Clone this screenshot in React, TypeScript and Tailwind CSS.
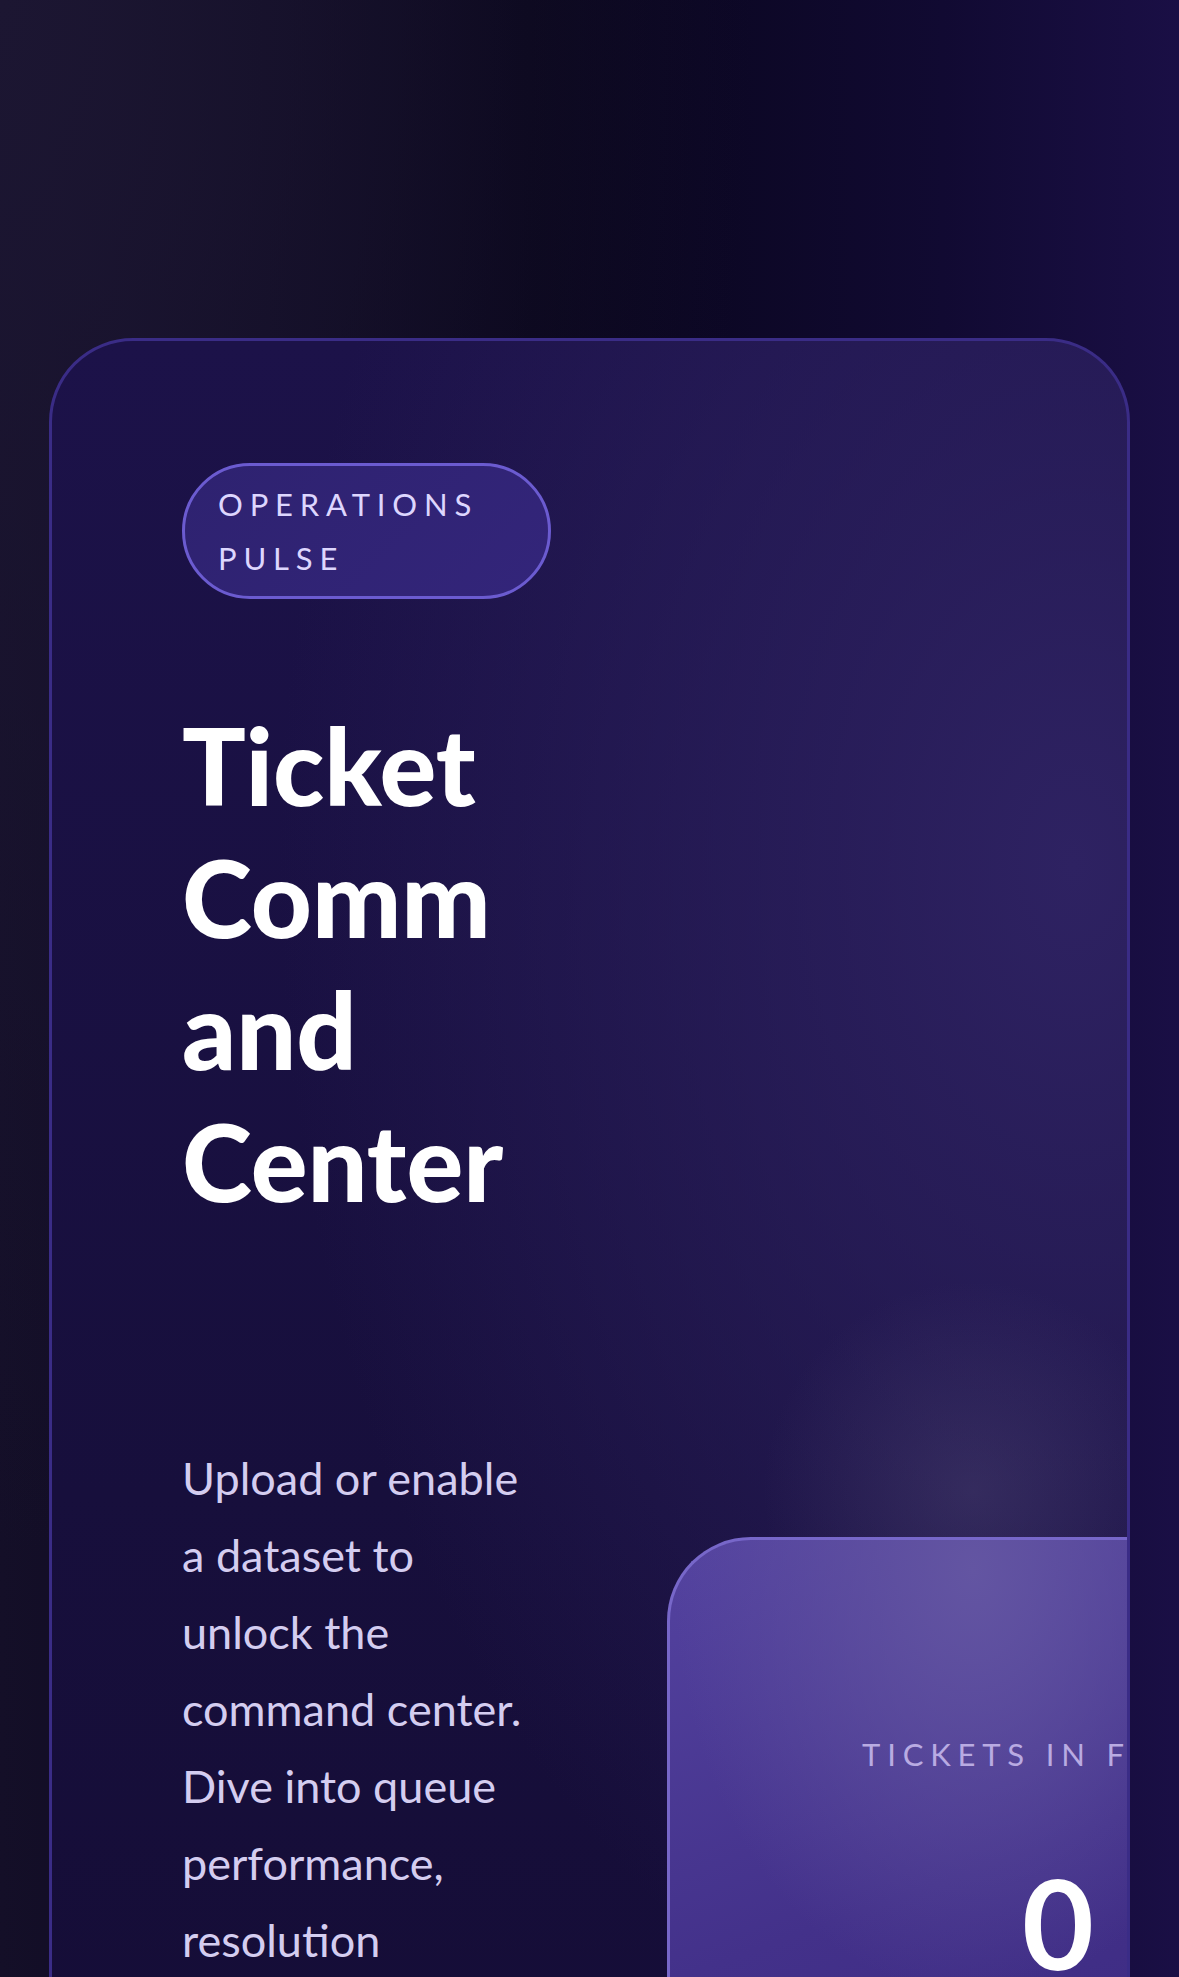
import React from 'react';

const stats = [{ label: 'Tickets in focus', value: '0' }];

export default function App() {
  return (
    <div className="min-h-[1977px] w-full overflow-hidden bg-[radial-gradient(ellipse_at_0%_0%,#1c1632_0%,transparent_45%),linear-gradient(90deg,#140f28_0%,#08051a_45%,#110a32_80%,#1a0f45_100%)] px-[49px] pt-[338px] font-['Lato',sans-serif]">
      <section className="relative overflow-hidden rounded-t-[84px] border-[3px] border-[#3a2c86] bg-[radial-gradient(circle_at_921px_1150px,rgba(92,84,128,0.32)_0%,transparent_210px),radial-gradient(ellipse_at_95%_25%,#2e2262_0%,transparent_55%),linear-gradient(180deg,#1c1249_0%,#170f3c_55%,#140c34_100%)] px-[130px] pt-[122px] pb-[200px]">
        {/* Header */}
        <div className="flex w-[369px] flex-col">
          <span className="rounded-full border-[3px] border-[#6b5bd0] bg-[linear-gradient(135deg,#2e2270,#33257a)] px-[33px] py-[11px] text-[31px] leading-[54px] tracking-[0.22em] text-[#ddd6fe] uppercase">
            Operations Pulse
          </span>
          <h1 className="mt-[100px] w-[335px] text-[106px] leading-[132px] font-black text-white [overflow-wrap:anywhere]">
            Ticket Command Center
          </h1>
        </div>

        {/* Body */}
        <div className="mt-[213px] flex gap-[116px]">
          <p className="w-[369px] shrink-0 pr-[9px] text-[45px] leading-[77px] text-[#d4cdf0]">
            Upload or enable a dataset to unlock the command center. Dive into queue performance, resolution velocity and team workload at a glance.
          </p>

          <div className="mt-[97px] w-[778px] shrink-0">
            {stats.map((s) => (
              <div
                key={s.label}
                className="h-[700px] rounded-tl-[84px] border-t-[3px] border-l-[3px] border-[#7767c9] bg-[radial-gradient(ellipse_at_303px_30px,#6355a2_0%,transparent_45%),linear-gradient(160deg,#5443a0_0%,#43318a_45%,#37257a_100%)] pt-[194px]"
              >
                <p className="pl-[192px] text-[31px] leading-[40px] tracking-[0.22em] text-[#b9abe2] uppercase">
                  {s.label}
                </p>
                <p className="mt-[82px] pl-[352px] text-[124px] leading-[132px] font-bold text-white">
                  {s.value}
                </p>
              </div>
            ))}
          </div>
        </div>
      </section>
    </div>
  );
}
